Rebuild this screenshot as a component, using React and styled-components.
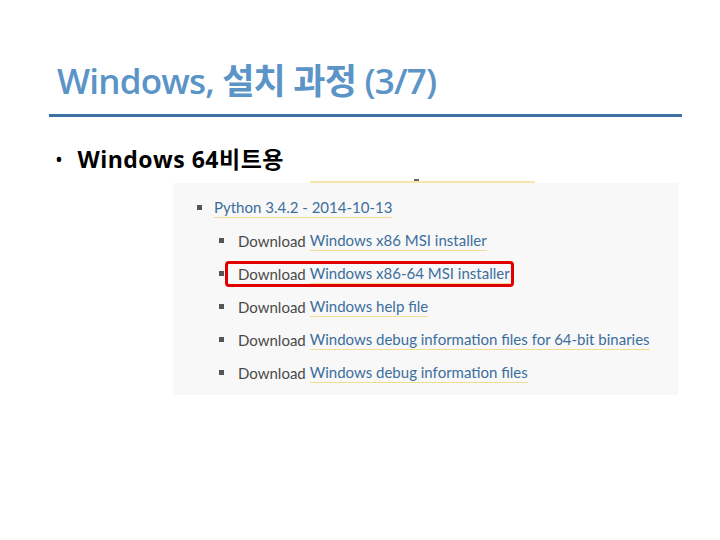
import React from "react";
import styled, { createGlobalStyle } from "styled-components";

const GlobalStyle = createGlobalStyle`
  html, body {
    margin: 0;
    padding: 0;
    background: #ffffff;
  }
`;

const Slide = styled.div`
  width: 720px;
  height: 540px;
  box-sizing: border-box;
  padding: 56px 38px 0 49px;
  display: flex;
  flex-direction: column;
  font-family: "Open Sans", "Noto Sans CJK KR", sans-serif;
`;

const Title = styled.h1`
  margin: 0 0 0 8px;
  font-family: "Open Sans", "Noto Sans CJK KR", sans-serif;
  font-weight: 600;
  font-size: 35px;
  line-height: 50px;
  letter-spacing: -0.8px;
  color: #5b94c7;
`;

const Rule = styled.div`
  margin-top: 8px;
  height: 3px;
  background: #3b71a3;
`;

const Bullet = styled.div`
  margin: 26px 0 0 6px;
  display: flex;
  align-items: center;
  gap: 14px;
  font-family: "Open Sans", "Noto Sans CJK KR", sans-serif;
  font-weight: 700;
  font-size: 23px;
  line-height: 32px;
  color: #000;
  letter-spacing: 0.5px;
  &::before {
    content: "•";
    font-weight: 400;
    font-size: 21px;
  }
`;

const Shot = styled.div`
  margin: 5px 0 0 124px;
  width: 505px;
  display: flex;
  flex-direction: column;
  font-family: "Lato", "Open Sans", sans-serif;
  font-size: 15px;
`;

const ShotTop = styled.div`
  height: 3px;
  background: #fff;
  display: flex;
  align-items: flex-end;
`;

const CutLine = styled.div`
  margin-left: 137px;
  width: 225px;
  height: 2px;
  background: #f3e5ae;
  position: relative;
  &::after {
    content: "";
    position: absolute;
    left: 104px;
    top: -2px;
    width: 5px;
    height: 2px;
    background: #666;
  }
`;

const ShotBody = styled.div`
  background: #f8f8f8;
  padding: 14px 0 12px 24px;
  display: flex;
  flex-direction: column;
  gap: 12px;
`;

const Item = styled.div`
  display: flex;
  align-items: center;
  height: 21px;
  padding-left: ${(p) => (p.$nested ? "22px" : "0")};
  color: #4a4a4a;
  white-space: nowrap;
  &::before {
    content: "";
    width: 5px;
    height: 5px;
    background: #555;
    margin-right: ${(p) => (p.$nested ? "14px" : "12px")};
    flex: none;
  }
`;

const Link = styled.span`
  color: #3c6e9d;
  border-bottom: 1px solid #f1dc94;
  line-height: 19px;
  margin-left: ${(p) => (p.$gap ? "4px" : "0")};
`;

const Highlight = styled.span`
  display: inline-flex;
  align-items: center;
  border: 3px solid #e00000;
  border-radius: 4px;
  padding: 0 1px 0 10px;
  margin-left: -13px;
  height: 20px;
`;

const rows = [
  "Windows x86 MSI installer",
  "Windows x86-64 MSI installer",
  "Windows help file",
  "Windows debug information files for 64-bit binaries",
  "Windows debug information files",
];

export default function App() {
  return (
    <>
      <GlobalStyle />
      <Slide>
        <Title>Windows, 설치 과정 (3/7)</Title>
        <Rule />
        <Bullet>Windows 64비트용</Bullet>
        <Shot>
          <ShotTop>
            <CutLine />
          </ShotTop>
          <ShotBody>
            <Item>
              <Link>Python 3.4.2 - 2014-10-13</Link>
            </Item>
            {rows.map((r, i) =>
              i === 1 ? (
                <Item key={r} $nested>
                  <Highlight>
                    Download<Link $gap>{r}</Link>
                  </Highlight>
                </Item>
              ) : (
                <Item key={r} $nested>
                  Download<Link $gap>{r}</Link>
                </Item>
              )
            )}
          </ShotBody>
        </Shot>
      </Slide>
    </>
  );
}
